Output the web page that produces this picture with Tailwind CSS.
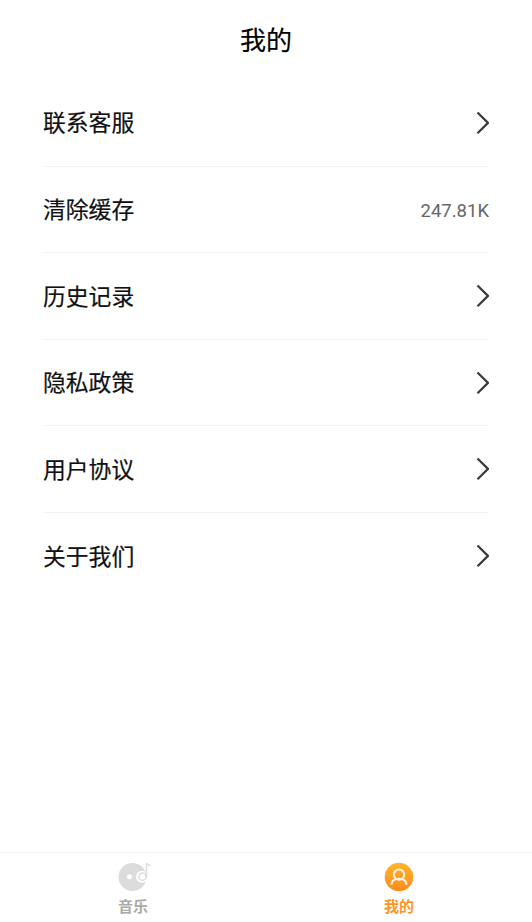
<!DOCTYPE html>
<html><head><meta charset="utf-8">
<script src="https://cdn.jsdelivr.net/npm/@tailwindcss/browser@4"></script>
</head>
<body class="bg-white">
<div class="w-[532px] h-[922px] flex flex-col overflow-hidden bg-white font-['Roboto','Noto_Sans_CJK_SC',sans-serif]">
  <header class="h-[80px] flex items-center justify-center text-[26px] text-black leading-none pt-[2px] [-webkit-text-stroke:0.2px_black]">我的</header>
  <main class="flex-1 px-[43px]">
    <div class="h-[87px] flex items-center justify-between border-b border-[#f2f2f2] text-[22.8px] text-[#111] pb-[1px]"><span class="pt-[4px] [-webkit-text-stroke:0.2px_#111]">联系客服</span>
      <svg class="w-[16px] h-[24px]" viewBox="0 0 16 24" fill="none" stroke="#3a3a3a" stroke-width="2.2"><path d="M4.500 1.500 L15 11.900 L4.500 22.300"/></svg></div>
    <div class="h-[86px] flex items-center justify-between border-b border-[#f2f2f2] text-[22.8px] text-[#111]"><span class="pt-[4px] [-webkit-text-stroke:0.2px_#111]">清除缓存</span><span class="text-[18.5px] text-[#666] pt-[4px]">247.81K</span></div>
    <div class="h-[87px] flex items-center justify-between border-b border-[#f2f2f2] text-[22.8px] text-[#111]"><span class="pt-[4px] [-webkit-text-stroke:0.2px_#111]">历史记录</span>
      <svg class="w-[16px] h-[24px]" viewBox="0 0 16 24" fill="none" stroke="#3a3a3a" stroke-width="2.2"><path d="M4.500 1.500 L15 11.900 L4.500 22.300"/></svg></div>
    <div class="h-[86px] flex items-center justify-between border-b border-[#f2f2f2] text-[22.8px] text-[#111]"><span class="pt-[4px] [-webkit-text-stroke:0.2px_#111]">隐私政策</span>
      <svg class="w-[16px] h-[24px]" viewBox="0 0 16 24" fill="none" stroke="#3a3a3a" stroke-width="2.2"><path d="M4.500 1.500 L15 11.900 L4.500 22.300"/></svg></div>
    <div class="h-[87px] flex items-center justify-between border-b border-[#f2f2f2] text-[22.8px] text-[#111]"><span class="pt-[4px] [-webkit-text-stroke:0.2px_#111]">用户协议</span>
      <svg class="w-[16px] h-[24px]" viewBox="0 0 16 24" fill="none" stroke="#3a3a3a" stroke-width="2.2"><path d="M4.500 1.500 L15 11.900 L4.500 22.300"/></svg></div>
    <div class="h-[86px] flex items-center justify-between text-[22.8px] text-[#111]"><span class="pt-[4px] [-webkit-text-stroke:0.2px_#111]">关于我们</span>
      <svg class="w-[16px] h-[24px]" viewBox="0 0 16 24" fill="none" stroke="#3a3a3a" stroke-width="2.2"><path d="M4.500 1.500 L15 11.900 L4.500 22.300"/></svg></div>
  </main>
  <nav class="h-[70px] border-t border-[#f2f2f2] grid grid-cols-2">
    <div class="flex flex-col items-center pt-[9px]">
      <svg class="w-[34px] h-[30px] ml-[1px]" viewBox="0 0 34 30">
        <path fill="#dcdcdc" fill-rule="evenodd" d="M15.500 1a14 14 0 1 1 0 28a14 14 0 0 1 0-28zM12.500 12.200a2.500 2.500 0 1 0 0 5a2.500 2.500 0 0 0 0-5z"/>
        <circle cx="25" cy="14.700" r="6" fill="#fff"/>
        <circle cx="25.500" cy="14.700" r="3.600" fill="none" stroke="#dcdcdc" stroke-width="1.500"/>
        <path d="M29.500 14.700V1c.8 2.300 2.500 2 4 2.700" fill="none" stroke="#dcdcdc" stroke-width="1.500"/>
      </svg>
      <span class="text-[15px] leading-[18px] font-bold text-[#aaa] mt-[6px]">音乐</span>
    </div>
    <div class="flex flex-col items-center pt-[9px]">
      <svg class="w-[30px] h-[30px]" viewBox="0 0 30 30">
        <defs><linearGradient id="g" x1="0" y1="0" x2="0" y2="1"><stop offset="0" stop-color="#ffb52e"/><stop offset="1" stop-color="#fd8b1c"/></linearGradient></defs>
        <circle cx="15" cy="15" r="14.300" fill="url(#g)"/>
        <circle cx="15" cy="12.700" r="5.200" fill="none" stroke="#fff3e0" stroke-width="2"/>
        <path d="M7.500 22c.5-3.500 3.500-5.200 7.500-5.200s7 1.700 7.500 5.200" fill="none" stroke="#fff3e0" stroke-width="2" stroke-linecap="round"/>
      </svg>
      <span class="text-[15px] leading-[18px] font-bold text-[#fd942b] mt-[6px]">我的</span>
    </div>
  </nav>
</div>
</body></html>
